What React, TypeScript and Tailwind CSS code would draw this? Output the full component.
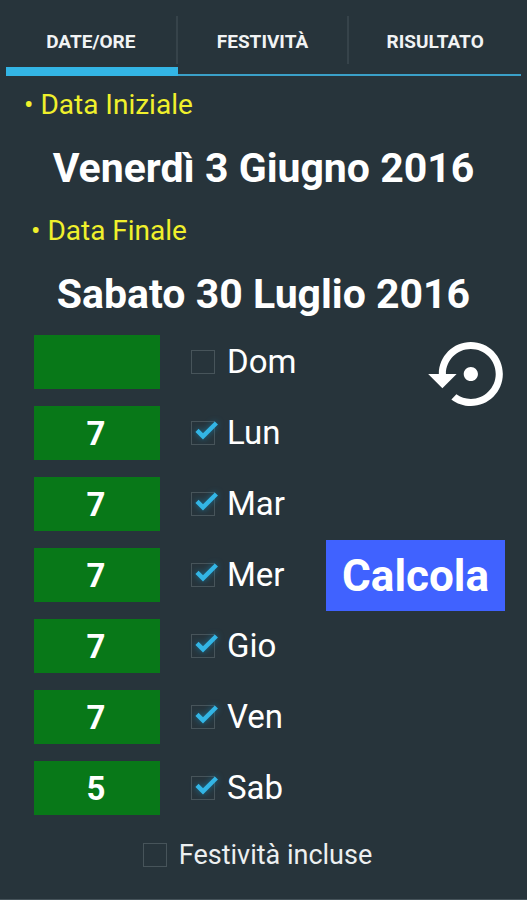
import React, { useState } from 'react';
import clsx from 'clsx';

const tabs = ['DATE/ORE', 'FESTIVITÀ', 'RISULTATO'];

const initialDays = [
  { id: 'dom', label: 'Dom', hours: '', checked: false },
  { id: 'lun', label: 'Lun', hours: '7', checked: true },
  { id: 'mar', label: 'Mar', hours: '7', checked: true },
  { id: 'mer', label: 'Mer', hours: '7', checked: true },
  { id: 'gio', label: 'Gio', hours: '7', checked: true },
  { id: 'ven', label: 'Ven', hours: '7', checked: true },
  { id: 'sab', label: 'Sab', hours: '5', checked: true },
];

interface CheckboxProps {
  id: string;
  checked: boolean;
  onChange: (checked: boolean) => void;
}

function Checkbox({ id, checked, onChange }: CheckboxProps) {
  return (
    <span className="relative block w-6 h-6 shrink-0">
      <input
        id={id}
        type="checkbox"
        checked={checked}
        onChange={e => onChange(e.target.checked)}
        className="block appearance-none w-6 h-6 border border-[#47545a] cursor-pointer"
      />
      {checked && (
        <svg
          viewBox="0 0 24 24"
          className="absolute inset-0 w-6 h-6 overflow-visible pointer-events-none drop-shadow-[0_0_3px_#1b6f92]"
          fill="none"
          stroke="#33b5e5"
          strokeWidth="4.4"
        >
          <path d="M6 9.4 L12 15.4 L25.4 2" />
        </svg>
      )}
    </span>
  );
}

export default function App() {
  const [activeTab, setActiveTab] = useState(0);
  const [days, setDays] = useState(initialDays);
  const [holidays, setHolidays] = useState(false);

  const updateDay = (id: string, patch: { hours?: string; checked?: boolean }) => {
    setDays(days.map(day => (day.id === id ? { ...day, ...patch } : day)));
  };

  return (
    <div className="min-h-screen bg-[#27343b] border-b border-[#46535a] text-white font-[Roboto,sans-serif]">
      <nav className="flex px-1.5 h-19">
        {tabs.map((tab, i) => (
          <button
            key={tab}
            onClick={() => setActiveTab(i)}
            className={clsx(
              'flex-1 flex flex-col pt-4 font-bold text-[19px] text-[#f1f3f4] cursor-pointer',
              activeTab === i ? 'border-b-9 border-[#33b5e5]' : 'border-b-2 border-[#3aa0c8]'
            )}
          >
            <span
              className={clsx(
                'w-full h-12 flex items-center justify-center pt-1',
                i < tabs.length - 1 && 'border-r-2 border-[#36434a]'
              )}
            >
              {tab}
            </span>
          </button>
        ))}
      </nav>

      <main>
        <h2 className="pl-6 h-[58px] flex items-center text-[28px] text-[#f0f02c]">• Data Iniziale</h2>
        <button className="w-full h-[68px] pt-0.5 font-bold text-[41px] cursor-pointer">Venerdì 3 Giugno 2016</button>
        <h2 className="pl-[31px] h-[58px] flex items-center text-[28px] text-[#f0f02c]">• Data Finale</h2>
        <button className="w-full h-[68px] pt-0.5 font-bold text-[41px] cursor-pointer">Sabato 30 Luglio 2016</button>

        <div className="flex justify-between pt-[7px] pl-[34px] pr-[22px]">
          <div className="flex flex-col gap-[17px]">
            {days.map(day => (
              <div key={day.id} className="flex items-center">
                <input
                  type="text"
                  aria-label={`Ore ${day.label}`}
                  value={day.hours}
                  onChange={e => updateDay(day.id, { hours: e.target.value })}
                  className="w-[126px] h-[54px] pr-0.5 mr-[31px] bg-[#087818] text-center font-bold text-[33px]"
                />
                <Checkbox id={day.id} checked={day.checked} onChange={checked => updateDay(day.id, { checked })} />
                <label htmlFor={day.id} className="pl-3 text-[33px] leading-[54px] cursor-pointer">
                  {day.label}
                </label>
              </div>
            ))}
          </div>

          <div className="flex flex-col items-end pt-[7px]">
            <button aria-label="Ripristina" onClick={() => setDays(initialDays)} className="mr-0.5 cursor-pointer">
              <svg viewBox="0 3 21 18" className="w-[75px] h-16" fill="currentColor">
                <path d="M14 12c0-1.1-.9-2-2-2s-2 .9-2 2 .9 2 2 2 2-.9 2-2zm-2-9c-4.97 0-9 4.03-9 9H0l4 4 4-4H5c0-3.87 3.13-7 7-7s7 3.13 7 7-3.13 7-7 7c-1.51 0-2.91-.49-4.06-1.3l-1.42 1.44C8.04 20.3 9.94 21 12 21c4.97 0 9-4.03 9-9s-4.03-9-9-9z" />
              </svg>
            </button>
            <button className="mt-[134px] px-4 h-[71px] bg-[#4062ff] font-bold text-[44px] cursor-pointer">
              Calcola
            </button>
          </div>
        </div>

        <div className="flex items-center justify-center pt-5 pr-3">
          <Checkbox id="festivita" checked={holidays} onChange={setHolidays} />
          <label htmlFor="festivita" className="pl-3 text-[27px] leading-10 text-[#eceff0] cursor-pointer">
            Festività incluse
          </label>
        </div>
      </main>
    </div>
  );
}
